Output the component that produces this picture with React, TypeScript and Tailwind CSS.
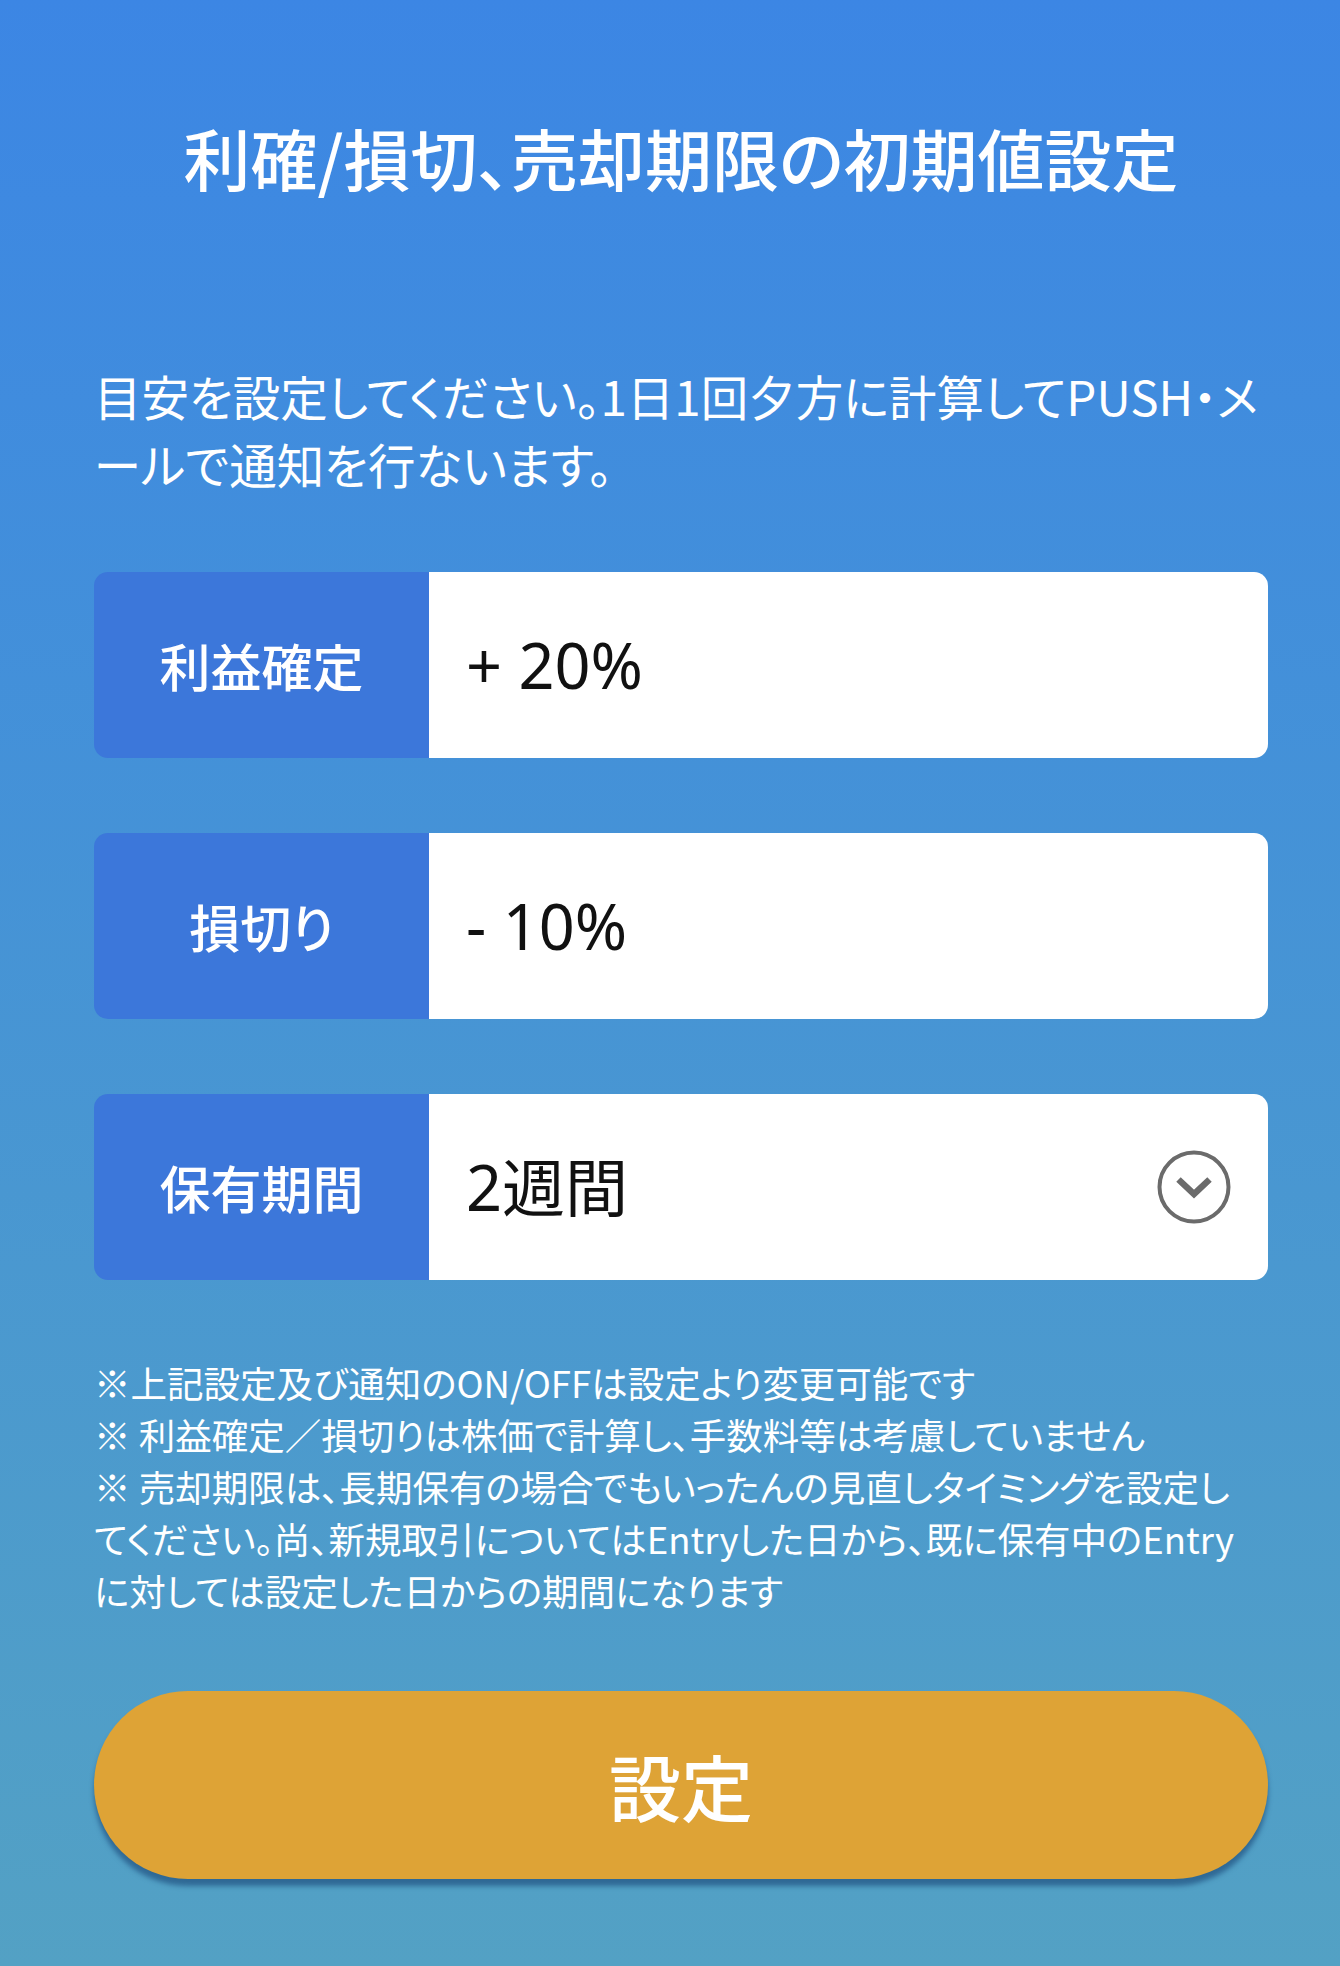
import React from 'react';

const jp = '[font-family:"Noto_Sans_CJK_JP",sans-serif] [font-feature-settings:"palt"]';

function ChevronCircle(): JSX.Element {
  return (
    <svg width="76" height="76" viewBox="0 0 76 76" fill="none">
      <circle cx="38" cy="38" r="34.5" stroke="#6b6b6b" strokeWidth="4" />
      <path d="M22.5 30.5 L38 45 L53.5 30.5" stroke="#6b6b6b" strokeWidth="6.5" strokeLinecap="butt" strokeLinejoin="miter" />
    </svg>
  );
}

interface RowProps {
  label: string;
  value: string;
  select?: boolean;
}

function FieldRow({ label, value, select }: RowProps): JSX.Element {
  return (
    <div className="flex h-[186px] overflow-hidden rounded-[14px]">
      <div className="flex w-[335px] shrink-0 items-center justify-center bg-[#3c77da] text-[51px] font-medium text-white">
        {label}
      </div>
      <div className="flex flex-1 items-center justify-between bg-white pl-[37px] pr-[36px]">
        <span className={`text-[63px] text-[#111] [font-family:"Noto_Sans","Noto_Sans_CJK_JP",sans-serif]`}>
          {value}
        </span>
        {select && <ChevronCircle />}
      </div>
    </div>
  );
}

export default function App(): JSX.Element {
  return (
    <div className={`${jp} min-h-[1966px] bg-gradient-to-b from-[#3c86e4] to-[#53a1c4] pl-[94px] pr-[72px] pt-[109px] pb-[89px]`}>
      <h1 className="text-center text-[67px] font-medium leading-[96px] text-white">
        利確/損切、売却期限の初期値設定
      </h1>

      <p className="mt-[157px] whitespace-nowrap text-[47.5px] leading-[68px] text-white">
        目安を設定してください。1日1回夕方に計算してPUSH・メ
        <br />
        ールで通知を行ないます。
      </p>

      <div className="mt-[74px] flex flex-col gap-[75px]">
        <FieldRow label="利益確定" value="+ 20%" />
        <FieldRow label="損切り" value="- 10%" />
        <FieldRow label="保有期間" value="2週間" select />
      </div>

      <div className="mt-[77px] whitespace-nowrap text-[36.5px] leading-[52px] text-white">
        <p>※上記設定及び通知のON/OFFは設定より変更可能です</p>
        <p>※ 利益確定／損切りは株価で計算し、手数料等は考慮していません</p>
        <p>
          ※ 売却期限は、長期保有の場合でもいったんの見直しタイミングを設定し
          <br />
          てください。尚、新規取引についてはEntryした日から、既に保有中のEntry
          <br />
          に対しては設定した日からの期間になります
        </p>
      </div>

      <button className="mt-[74px] flex h-[188px] w-full items-center justify-center rounded-full bg-[#dea336] text-[72px] font-medium text-white shadow-[0_7px_5px_rgba(20,60,110,0.55)]">
        設定
      </button>
    </div>
  );
}
